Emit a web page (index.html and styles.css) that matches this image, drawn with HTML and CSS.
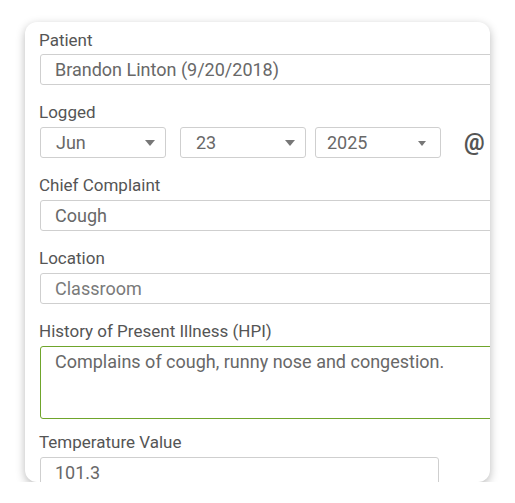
FILE: index.html
```html
<!DOCTYPE html>
<html>
<head>
<meta charset="utf-8">
<link rel="stylesheet" href="styles.css">
</head>
<body>
<div class="card">
  <div class="field first">
    <div class="label">Patient</div>
    <div class="input wide">Brandon Linton (9/20/2018)</div>
  </div>
  <div class="field">
    <div class="label">Logged</div>
    <div class="date-row">
      <div class="select s1"><span>Jun</span><i class="arrow"></i></div>
      <div class="select s2"><span>23</span><i class="arrow"></i></div>
      <div class="select s3"><span>2025</span><i class="arrow small"></i></div>
      <div class="at">@</div>
    </div>
  </div>
  <div class="field">
    <div class="label">Chief Complaint</div>
    <div class="input wide">Cough</div>
  </div>
  <div class="field">
    <div class="label">Location</div>
    <div class="input wide light">Classroom</div>
  </div>
  <div class="field">
    <div class="label">History of Present Illness (HPI)</div>
    <div class="textarea">Complains of cough, runny nose and congestion.</div>
  </div>
  <div class="field tight">
    <div class="label">Temperature Value</div>
    <div class="input temp">101.3</div>
  </div>
</div>
</body>
</html>
```
FILE: styles.css
```css
html, body {
  margin: 0;
  padding: 0;
  background: #ffffff;
}
body {
  font-family: Roboto, "Liberation Sans", sans-serif;
  padding: 22px 0 0 25px;
}
.card {
  width: 465px;
  height: 460px;
  box-sizing: border-box;
  border-radius: 12px;
  background: #fff;
  box-shadow: 0 3px 10px rgba(0, 0, 0, 0.28);
  overflow: hidden;
  padding: 8px 0 0 14px;
}
.field {
  margin-top: 17px;
}
.field.first {
  margin-top: 0;
}
.field.tight {
  margin-top: 13px;
}
.label {
  font-size: 17px;
  line-height: 20px;
  color: #555;
  margin-bottom: 5px;
  white-space: nowrap;
}
.field.first .label {
  margin-bottom: 4px;
}
.input, .select, .textarea {
  box-sizing: border-box;
  border: 1px solid #cfcfcf;
  border-radius: 3px;
  background: #fff;
  color: #686868;
  font-size: 18px;
  white-space: nowrap;
}
.input {
  height: 31px;
  line-height: 29px;
  padding-left: 14px;
  margin-left: 1px;
}
.input.wide {
  width: 480px;
}
.input.light {
  color: #7a7a7a;
}
.input.temp {
  width: 399px;
}
.date-row {
  display: flex;
  align-items: center;
  margin-left: 1px;
}
.select {
  width: 126px;
  height: 31px;
  display: flex;
  align-items: center;
  justify-content: space-between;
  padding: 0 10px 0 15px;
}
.s2 {
  margin-left: 14px;
}
.s3 {
  margin-left: 9px;
  padding: 0 14px 0 11px;
}
.arrow {
  width: 0;
  height: 0;
  border-left: 5px solid transparent;
  border-right: 5px solid transparent;
  border-top: 6px solid #777;
  margin-top: 1px;
}
.arrow.small {
  border-left-width: 4px;
  border-right-width: 4px;
  border-top-width: 5px;
}
.at {
  margin-left: 23px;
  font-size: 23px;
  font-weight: 700;
  color: #555;
}
.textarea {
  width: 480px;
  height: 73px;
  border-color: #6fa52b;
  padding: 4px 14px;
  margin-left: 1px;
  line-height: 22px;
}
```
